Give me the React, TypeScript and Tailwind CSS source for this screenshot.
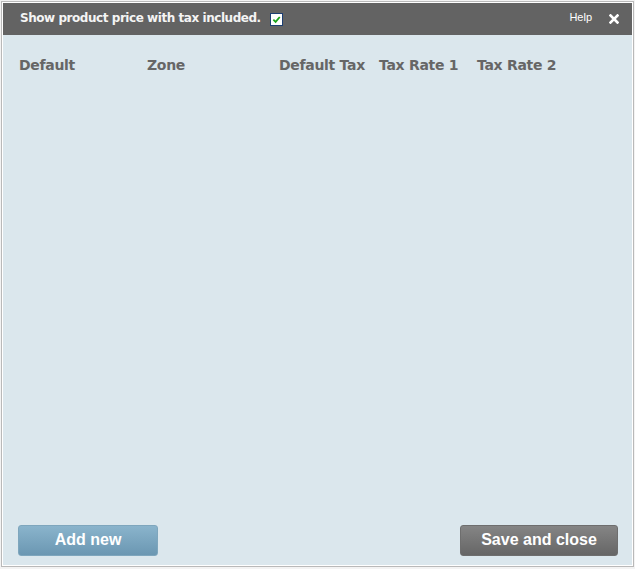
import { useState } from "react";

const columns = [
  { label: "Default", width: "w-[128px]" },
  { label: "Zone", width: "w-[132px]" },
  { label: "Default Tax", width: "w-[100px]" },
  { label: "Tax Rate 1", width: "w-[98px]" },
  { label: "Tax Rate 2", width: "w-[98px]" },
];

export default function App() {
  const [included, setIncluded] = useState(true);

  return (
    <div className="w-[635px] h-[569px] bg-[#f3f3f3] p-[1px] font-['DejaVu_Sans',sans-serif]">
      <div className="h-[566px] border border-[#b9b9b9] flex flex-col">
        <div className="border border-white flex flex-col flex-1 min-h-0">
          {/* Header bar */}
          <div className="h-[32px] bg-[#636363] flex items-center pl-[17px] pr-[10px] shrink-0">
            <span className="text-[12px] font-bold text-[#f4f4f4] tracking-[-0.45px] -mt-[2px]">
              Show product price with tax included.
            </span>
            <button
              onClick={() => setIncluded(!included)}
              className="ml-[9px] w-[13px] h-[13px] bg-white border border-[#1d3f73] flex items-center justify-center"
            >
              {included && (
                <svg viewBox="0 0 10 10" className="w-[9px] h-[9px]">
                  <path d="M1.5 5.2 L4 7.6 L8.6 2.2" stroke="#1aa31a" strokeWidth="2" fill="none" />
                </svg>
              )}
            </button>
            <span className="ml-auto text-[11px] text-white font-['Liberation_Sans',sans-serif] mr-[17px] -mt-[4px]">
              Help
            </span>
            <svg viewBox="0 0 10 10" className="w-[10px] h-[10px] mr-[3px]">
              <path d="M1.5 1.5 L8.5 8.5 M8.5 1.5 L1.5 8.5" stroke="#ffffff" strokeWidth="2.6" strokeLinecap="square" />
            </svg>
          </div>

          {/* Body */}
          <div className="flex-1 bg-[#dbe7ed] flex flex-col min-h-0">
            <div className="flex pl-[16px] pt-[20px]">
              {columns.map((c) => (
                <div key={c.label} className={`${c.width} text-[14px] font-bold text-[#666666] tracking-[-0.3px]`}>
                  {c.label}
                </div>
              ))}
            </div>

            <div className="mt-auto flex justify-between pl-[15px] pr-[14px] pb-[9px]">
              <button className="w-[140px] h-[31px] rounded-[3px] bg-gradient-to-b from-[#8ab4cc] to-[#6b97b2] border border-[#7ea6bd] text-white text-[16px] font-bold font-['Liberation_Sans',sans-serif] pb-[1px]">
                Add new
              </button>
              <button className="w-[158px] h-[31px] rounded-[3px] bg-gradient-to-b from-[#858585] to-[#666666] border border-[#6e6e6e] text-white text-[16px] font-bold font-['Liberation_Sans',sans-serif] pb-[1px]">
                Save and close
              </button>
            </div>
          </div>
        </div>
      </div>
    </div>
  );
}
